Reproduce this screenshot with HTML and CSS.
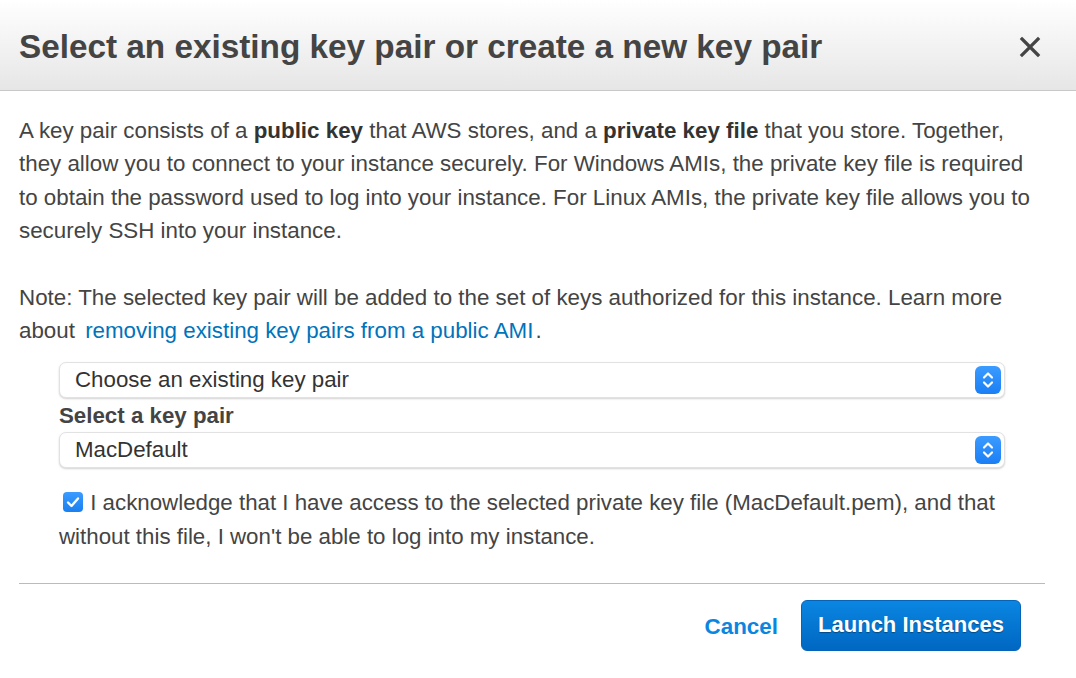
FILE: index.html
```html
<!DOCTYPE html>
<html>
<head>
<meta charset="utf-8">
<link rel="stylesheet" href="styles.css">
</head>
<body>
<div class="dialog">
  <div class="header">
    <h1 class="title">Select an existing key pair or create a new key pair</h1>
    <span class="close">
      <svg width="22" height="22" viewBox="0 0 22 22"><path d="M3 3 L19 19 M19 3 L3 19" stroke="#444" stroke-width="3.2" stroke-linecap="square"/></svg>
    </span>
  </div>
  <div class="content">
    <p class="para">A key pair consists of a <b>public key</b> that AWS stores, and a <b>private key file</b> that you store. Together, they allow you to connect to your instance securely. For Windows AMIs, the private key file is required to obtain the password used to log into your instance. For Linux AMIs, the private key file allows you to securely SSH into your instance.</p>
    <p class="para note">Note: The selected key pair will be added to the set of keys authorized for this instance. Learn more about <a class="link" href="#">removing existing key pairs from a public AMI</a>.</p>
    <div class="form">
      <div class="select">
        <span class="select-text">Choose an existing key pair</span>
        <span class="stepper"><svg width="14" height="20" viewBox="0 0 14 20"><path d="M3 7.5 L7 3.5 L11 7.5 M3 12.5 L7 16.5 L11 12.5" fill="none" stroke="#fff" stroke-width="2.2" stroke-linecap="round" stroke-linejoin="round"/></svg></span>
      </div>
      <div class="label">Select a key pair</div>
      <div class="select">
        <span class="select-text">MacDefault</span>
        <span class="stepper"><svg width="14" height="20" viewBox="0 0 14 20"><path d="M3 7.5 L7 3.5 L11 7.5 M3 12.5 L7 16.5 L11 12.5" fill="none" stroke="#fff" stroke-width="2.2" stroke-linecap="round" stroke-linejoin="round"/></svg></span>
      </div>
      <p class="ack"><span class="checkbox"><svg width="20" height="20" viewBox="0 0 20 20"><path d="M5 10.5 L8.5 14 L15 6.5" fill="none" stroke="#fff" stroke-width="2.4" stroke-linecap="round" stroke-linejoin="round"/></svg></span> I acknowledge that I have access to the selected private key file (MacDefault.pem), and that without this file, I won't be able to log into my instance.</p>
    </div>
    <div class="divider"></div>
    <div class="actions">
      <a class="cancel" href="#">Cancel</a>
      <button class="launch">Launch Instances</button>
    </div>
  </div>
</div>
</body>
</html>
```

FILE: styles.css
```css
html, body {
  margin: 0;
  padding: 0;
  background: #fff;
}
body {
  font-family: "Liberation Sans", Arial, sans-serif;
  color: #444;
}
.dialog {
  width: 1076px;
  height: 678px;
  overflow: hidden;
}
.header {
  height: 86px;
  display: flex;
  align-items: center;
  justify-content: space-between;
  padding: 4px 35px 0 19px;
  background: linear-gradient(#ffffff, #e6e6e6);
  border-bottom: 1px solid #c8c8c8;
}
.title {
  margin: 0;
  font-size: 33.3px;
  font-weight: bold;
  color: #444;
}
.close {
  display: flex;
  width: 22px;
  height: 22px;
}
.content {
  padding: 0 19px;
}
.para {
  margin: 0;
  max-width: 1022px;
  font-size: 22.35px;
  line-height: 33.3px;
  color: #444;
}
.para:first-child {
  margin-top: 23px;
}
.para b {
  color: #333;
}
.note {
  margin-top: 34px;
}
.link {
  color: #0073bb;
  text-decoration: none;
  margin-left: 4px;
  margin-right: 2px;
}
.form {
  margin: 14px 52px 0 40px;
}
.select {
  height: 34px;
  border: 1px solid #e2e2e2;
  border-radius: 7px;
  box-shadow: 0 1px 2px rgba(0,0,0,0.18);
  display: flex;
  align-items: center;
  justify-content: space-between;
  padding: 0 3px 0 15px;
  background: #fff;
}
.select-text {
  font-size: 22.3px;
  color: #333;
}
.stepper {
  width: 26px;
  height: 28px;
  border-radius: 6px;
  background: linear-gradient(#3b9bff, #1a7ff5);
  display: flex;
  align-items: center;
  justify-content: center;
}
.label {
  font-size: 22.3px;
  font-weight: bold;
  color: #444;
  line-height: 26px;
  margin: 5px 0 3px;
}
.ack {
  margin: 18px 0 0;
  font-size: 22.3px;
  line-height: 34px;
  color: #444;
}
.checkbox {
  display: inline-flex;
  width: 20px;
  height: 20px;
  border-radius: 4px;
  background: linear-gradient(#3a9cff, #1a7ff0);
  vertical-align: -2px;
  margin-left: 4px;
  margin-right: 1px;
}
.divider {
  margin: 29px 12px 0 0;
  border-top: 1px solid #bbbbbb;
}
.actions {
  display: flex;
  justify-content: flex-end;
  align-items: center;
  gap: 23px;
  margin-top: 16px;
  padding-right: 36px;
}
.cancel {
  font-size: 22.4px;
  font-weight: bold;
  color: #0a86e0;
  text-decoration: none;
  margin-top: 3px;
}
.launch {
  height: 51px;
  width: 220px;
  border: 1px solid #0563b8;
  border-radius: 6px;
  background: linear-gradient(#0a86e2, #0067c2);
  color: #fff;
  font-family: "Liberation Sans", Arial, sans-serif;
  font-size: 22px;
  font-weight: bold;
  text-shadow: 0 1px 1px rgba(0,0,0,0.35);
  padding: 0;
}
```
